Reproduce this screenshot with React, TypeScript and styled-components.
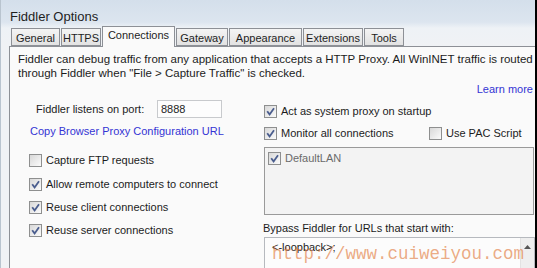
import React from "react";
import styled, { createGlobalStyle } from "styled-components";

const GlobalStyle = createGlobalStyle`
  html, body {
    margin: 0;
    padding: 0;
    background: #000;
  }
  body {
    width: 537px;
    height: 268px;
    overflow: hidden;
    font-family: "Liberation Sans", Arial, sans-serif;
    font-size: 11px;
    color: #1c1c1c;
  }
`;

// 左の列の項目
const leftOptions = [
  { label: "Capture FTP requests", checked: false, top: 14 },
  { label: "Allow remote computers to connect", checked: true, top: 8 },
  { label: "Reuse client connections", checked: true, top: 7 },
  { label: "Reuse server connections", checked: true, top: 7 },
];

// タブ名と幅
const tabs = [
  { name: "General", width: 49 },
  { name: "HTTPS", width: 40 },
  { name: "Connections", width: 73 },
  { name: "Gateway", width: 52 },
  { name: "Appearance", width: 73 },
  { name: "Extensions", width: 60 },
  { name: "Tools", width: 40 },
];

const CheckBox = ({ checked }: { checked: boolean }) => (
  <Box>
    {checked && (
      <svg width="9" height="9" viewBox="0 0 9 9">
        <path d="M1.2 4.2 L3.6 7.4 L8 1.2" fill="none" stroke="#4a5d8e" strokeWidth="1.8" />
      </svg>
    )}
  </Box>
);

export default function App() {
  return (
    <>
      <GlobalStyle />
      <Window>
        <TitleBar>Fiddler Options</TitleBar>
        <TabStrip>
          {tabs.map((t) => (
            <Tab key={t.name} active={t.name === "Connections"} w={t.width}>
              {t.name}
            </Tab>
          ))}
        </TabStrip>
        <Panel>
          <Intro>
            Fiddler can debug traffic from any application that accepts a HTTP Proxy. All WinINET traffic is routed
            <br />
            through Fiddler when "File &gt; Capture Traffic" is checked.
          </Intro>
          <LearnMore>Learn more</LearnMore>
          <Columns>
            <LeftCol>
              <PortRow>
                <span>Fiddler listens on port:</span>
                <PortInput>8888</PortInput>
              </PortRow>
              <Link>Copy Browser Proxy Configuration URL</Link>
              {leftOptions.map((o) => (
                <CheckRow key={o.label} top={o.top}>
                  <CheckBox checked={o.checked} />
                  {o.label}
                </CheckRow>
              ))}
            </LeftCol>
            <RightCol>
              <CheckRow top={0}>
                <CheckBox checked />
                Act as system proxy on startup
              </CheckRow>
              <SplitRow>
                <CheckRow top={0}>
                  <CheckBox checked />
                  Monitor all connections
                </CheckRow>
                <CheckRow top={0}>
                  <CheckBox checked={false} />
                  Use PAC Script
                </CheckRow>
              </SplitRow>
              <ListBox>
                <ListItem>
                  <CheckBox checked />
                  DefaultLAN
                </ListItem>
              </ListBox>
              <BypassLabel>Bypass Fiddler for URLs that start with:</BypassLabel>
              <BypassBox>
                <span>&lt;-loopback&gt;;</span>
                <ScrollBar>
                  <svg width="7" height="4" viewBox="0 0 7 4">
                    <path d="M0 4 L3.5 0 L7 4 Z" fill="#555" />
                  </svg>
                </ScrollBar>
                <Watermark>http://www.cuiweiyou.com</Watermark>
              </BypassBox>
            </RightCol>
          </Columns>
        </Panel>
      </Window>
    </>
  );
}

const Window = styled.div`
  width: 535px;
  height: 268px;
  display: flex;
  flex-direction: column;
  overflow: hidden;
  background: linear-gradient(#d4dfeb 0px, #dce5ef 22px, #eef2f6 28px, #f0f2f5 46px);
  border-left: 1px solid #b9c4cf;
  box-sizing: border-box;
`;

const TitleBar = styled.div`
  flex-shrink: 0;
  height: 26px;
  padding: 9px 0 0 9px;
  box-sizing: border-box;
  font-size: 13px;
  color: #1e1e1e;
`;

const TabStrip = styled.div`
  flex-shrink: 0;
  display: flex;
  align-items: flex-end;
  height: 20px;
  padding-left: 10px;
  gap: 1px;
  position: relative;
  z-index: 1;
`;

const Tab = styled.div<{ active: boolean; w: number }>`
  width: ${(p) => p.w}px;
  height: ${(p) => (p.active ? 21 : 18)}px;
  padding-top: ${(p) => (p.active ? 2 : 3)}px;
  margin-bottom: ${(p) => (p.active ? -1 : 0)}px;
  box-sizing: border-box;
  text-align: center;
  border: 1px solid #8d9096;
  border-bottom: ${(p) => (p.active ? "none" : "1px solid #8d9096")};
  background: ${(p) => (p.active ? "#fafafa" : "linear-gradient(#f4f4f4, #e2e2e2)")};
  color: #1e1e1e;
  font-size: 11px;
  white-space: nowrap;
`;

const Panel = styled.div`
  flex: 1;
  min-height: 0;
  overflow: hidden;
  margin-left: 8px;
  border-top: 1px solid #8d9096;
  border-left: 1px solid #8d9096;
  background: #fafafa;
  padding: 5px 0 0 8px;
`;

const Intro = styled.div`
  line-height: 14px;
  font-size: 11.5px;
  white-space: nowrap;
`;

const LearnMore = styled.div`
  text-align: right;
  padding-right: 2px;
  line-height: 14px;
  margin-top: 2px;
  color: #3434d4;
  font-size: 11px;
`;

const Columns = styled.div`
  display: grid;
  grid-template-columns: 235px 1fr;
  margin: 4px 0 0 11px;
`;

const LeftCol = styled.div`
  display: flex;
  flex-direction: column;
`;

const RightCol = styled.div`
  display: flex;
  flex-direction: column;
  padding-top: 3px;
`;

const PortRow = styled.div`
  display: flex;
  align-items: center;
  height: 18px;
  padding-left: 7px;
  font-size: 11px;
  span {
    width: 121px;
  }
`;

const PortInput = styled.div`
  width: 65px;
  height: 18px;
  box-sizing: border-box;
  border: 1px solid #c8cacd;
  background: #fdfdfd;
  padding: 2px 0 0 3px;
  font-size: 11px;
`;

const Link = styled.div`
  margin-top: 6px;
  padding-left: 1px;
  line-height: 14px;
  color: #3434d4;
  font-size: 11px;
`;

const CheckRow = styled.div<{ top: number }>`
  display: flex;
  align-items: center;
  gap: 4px;
  height: 16px;
  margin-top: ${(p) => p.top}px;
  font-size: 11px;
  white-space: nowrap;
`;

const SplitRow = styled.div`
  display: grid;
  grid-template-columns: 165px 1fr;
  margin-top: 6px;
`;

const Box = styled.div`
  width: 13px;
  height: 13px;
  box-sizing: border-box;
  border: 1px solid #8e8f8f;
  background: linear-gradient(135deg, #d8d8d8, #fbfbfb);
  display: flex;
  align-items: center;
  justify-content: center;
  flex-shrink: 0;
`;

const ListBox = styled.div`
  margin-top: 6px;
  width: 270px;
  height: 68px;
  box-sizing: border-box;
  border: 1px solid #9a9a9a;
  background: #f3f3f3;
  padding: 2px 3px;
`;

const ListItem = styled.div`
  display: flex;
  align-items: center;
  gap: 4px;
  height: 16px;
  color: #6a6a6a;
  font-size: 11px;
`;

const BypassLabel = styled.div`
  margin-top: 6px;
  line-height: 14px;
  margin-left: -1px;
  font-size: 11px;
`;

const BypassBox = styled.div`
  position: relative;
  margin-top: 2px;
  width: 271px;
  height: 40px;
  box-sizing: border-box;
  border: 1px solid #b6b9be;
  background: #fcfcfc;
  padding: 3px 0 0 7px;
  font-size: 11px;
`;

const ScrollBar = styled.div`
  position: absolute;
  top: 0;
  right: 0;
  width: 14px;
  height: 100%;
  background: #eeeeee;
  border-left: 1px solid #e2e2e2;
  display: flex;
  justify-content: center;
  padding-top: 7px;
  box-sizing: border-box;
`;

const Watermark = styled.div`
  position: absolute;
  left: 7px;
  top: 6px;
  font-family: "Liberation Mono", "Courier New", monospace;
  font-size: 17.5px;
  color: rgba(226, 125, 65, 0.65);
  white-space: nowrap;
`;
